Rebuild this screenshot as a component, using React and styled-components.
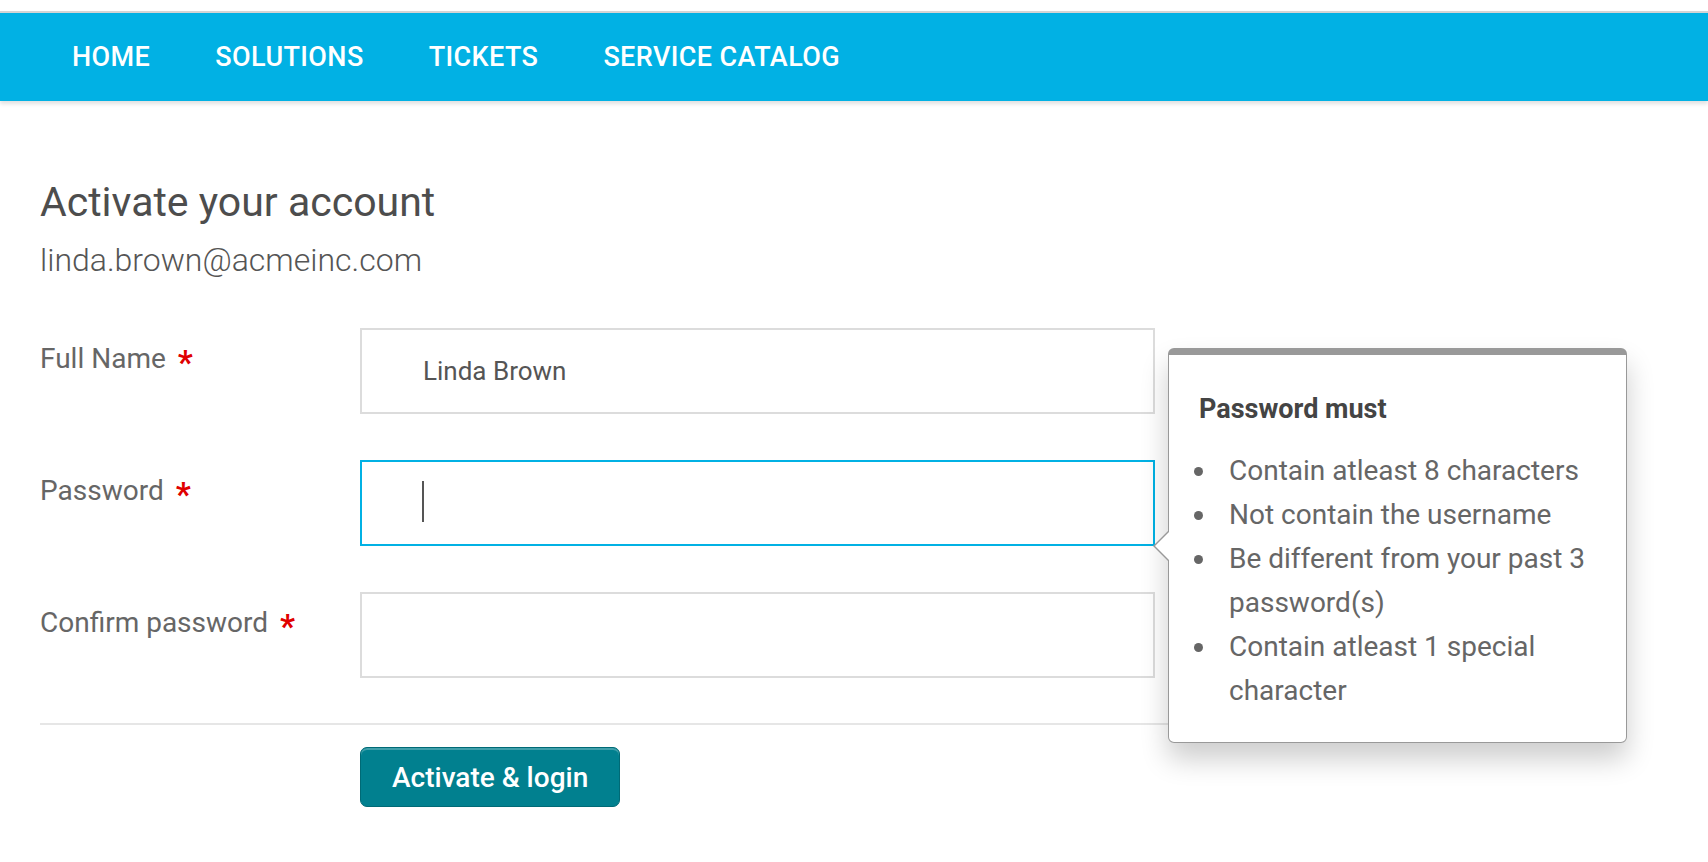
import styled, { createGlobalStyle } from "styled-components";

const GlobalStyle = createGlobalStyle`
  html, body {
    margin: 0;
    padding: 0;
    background: #fff;
    font-family: Roboto, "Liberation Sans", Arial, sans-serif;
  }
  * {
    box-sizing: border-box;
  }
`;

const navItems = ["HOME", "SOLUTIONS", "TICKETS", "SERVICE CATALOG"];

const rules = [
  "Contain atleast 8 characters",
  "Not contain the username",
  "Be different from your past 3 password(s)",
  "Contain atleast 1 special character",
];

const App = () => {
  return (
    <>
      <GlobalStyle />
      <Header>
        <Nav>
          {navItems.map((item) => (
            <NavLink key={item} href="#">
              {item}
            </NavLink>
          ))}
        </Nav>
      </Header>
      <Main>
        <Title>Activate your account</Title>
        <Email>linda.brown@acmeinc.com</Email>
        <Form>
          <Row>
            <Label>
              Full Name <Required>*</Required>
            </Label>
            <InputWrap>
              <Input type="text" defaultValue="Linda Brown" readOnly />
            </InputWrap>
          </Row>
          <Row>
            <Label>
              Password <Required>*</Required>
            </Label>
            <InputWrap>
              <Input type="password" focused readOnly />
              <Caret />
            </InputWrap>
          </Row>
          <Row>
            <Label>
              Confirm password <Required>*</Required>
            </Label>
            <InputWrap>
              <Input type="password" readOnly />
            </InputWrap>
          </Row>
          <Divider />
          <Actions>
            <Button type="button">Activate &amp; login</Button>
          </Actions>
        </Form>
        <Popover>
          <PopoverTitle>Password must</PopoverTitle>
          <RuleList>
            {rules.map((rule) => (
              <Rule key={rule}>
                <Dot />
                <span>{rule}</span>
              </Rule>
            ))}
          </RuleList>
        </Popover>
      </Main>
    </>
  );
};

const Header = styled.header`
  margin-top: 11px;
  border-top: 2px solid #d4d4d4;
  background: #01b1e4;
  height: 90px;
  box-shadow: 0 3px 4px rgba(0, 0, 0, 0.12);
  position: relative;
  z-index: 1;
`;

const Nav = styled.nav`
  display: flex;
  align-items: center;
  height: 100%;
  padding-left: 72px;
  gap: 65px;
`;

const NavLink = styled.a`
  color: #fff;
  text-decoration: none;
  font-size: 27px;
  font-weight: 500;
  letter-spacing: 0.4px;
  line-height: 1;
  margin-top: 1px;
`;

const Main = styled.main`
  position: relative;
  padding: 77px 40px 40px;
`;

const Title = styled.h1`
  margin: 0;
  font-size: 41px;
  line-height: 48px;
  font-weight: 400;
  color: #4d4d4d;
`;

const Email = styled.div`
  margin-top: 14px;
  font-size: 32px;
  line-height: 40px;
  font-weight: 300;
  color: #555;
`;

const Form = styled.form`
  margin-top: 48px;
  width: 1160px;
  display: flex;
  flex-direction: column;
  gap: 46px;
`;

const Row = styled.div`
  display: grid;
  grid-template-columns: 320px 795px;
  align-items: start;
`;

const Label = styled.label`
  padding-top: 11px;
  font-size: 28px;
  line-height: 36px;
  color: #666;
`;

const Required = styled.span`
  color: #e00000;
  font-weight: 700;
  font-size: 33px;
  position: relative;
  top: 6px;
  margin-left: 5px;
`;

const InputWrap = styled.div`
  position: relative;
`;

const Input = styled.input`
  display: block;
  width: 100%;
  height: 86px;
  padding: 0 20px 0 61px;
  border: 2px solid ${({ focused }) => (focused ? "#01b1e4" : "#dcdcdc")};
  border-radius: 0;
  outline: none;
  background: #fff;
  font-family: inherit;
  font-size: 26px;
  color: #555;
`;

const Caret = styled.span`
  position: absolute;
  left: 62px;
  top: 21px;
  width: 2px;
  height: 41px;
  background: #555;
`;

const Divider = styled.hr`
  margin: -1px 0 -24px;
  border: none;
  border-top: 2px solid #e6e6e6;
`;

const Actions = styled.div`
  padding-left: 320px;
`;

const Button = styled.button`
  height: 60px;
  padding: 0 31px;
  border: 1px solid #006a76;
  border-radius: 7px;
  background: #01808f;
  box-shadow: inset 0 2px 0 rgba(255, 255, 255, 0.25);
  color: #fff;
  font-family: inherit;
  font-size: 28px;
  font-weight: 500;
  cursor: pointer;
`;

const Popover = styled.div`
  position: absolute;
  left: 1168px;
  top: 247px;
  width: 459px;
  padding: 38px 26px 29px 30px;
  background: #fff;
  border: 1px solid #999;
  border-top: 7px solid #999;
  border-radius: 6px;
  box-shadow: 0 16px 28px rgba(0, 0, 0, 0.2);

  &::before,
  &::after {
    content: "";
    position: absolute;
    width: 0;
    height: 0;
    border-style: solid;
    border-color: transparent;
  }

  &::before {
    left: -16px;
    top: 176px;
    border-width: 15px 15px 15px 0;
    border-right-color: #999;
  }

  &::after {
    left: -14px;
    top: 177px;
    border-width: 14px 14px 14px 0;
    border-right-color: #fff;
  }
`;

const PopoverTitle = styled.div`
  font-size: 27px;
  line-height: 32px;
  font-weight: 700;
  color: #444;
`;

const RuleList = styled.ul`
  list-style: none;
  margin: 24px 0 0;
  padding: 0;
`;

const Rule = styled.li`
  display: flex;
  align-items: flex-start;
  font-size: 28px;
  line-height: 44px;
  color: #666;
`;

const Dot = styled.span`
  flex: none;
  width: 9px;
  height: 9px;
  margin: 18px 26px 0 -5px;
  border-radius: 50%;
  background: #666;
`;

export default App;
